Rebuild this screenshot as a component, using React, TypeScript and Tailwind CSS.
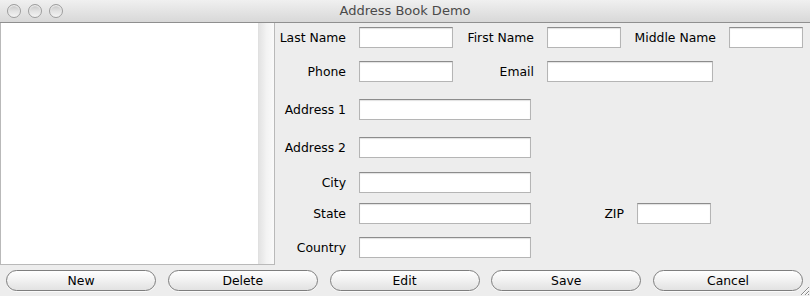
import React from 'react'

const font = { fontFamily: '"DejaVu Sans", Verdana, sans-serif' }

const Field = ({ w }: { w: string }) => (
  <div
    className={`${w} h-[21px] bg-white border border-[#b5b5b5] border-t-[#8c8c8c] shadow-[inset_0_1px_1px_rgba(0,0,0,0.12)]`}
  />
)

const Label = ({ w, text }: { w: string; text: string }) => (
  <div className={`${w} shrink-0 text-right text-[12.4px] text-black pr-[13px] pt-[2px]`}>{text}</div>
)

const Light = () => (
  <div className="w-[14px] h-[14px] rounded-full border border-[#9d9d9d] bg-gradient-to-b from-[#c4c4c4] via-[#e2e2e2] to-[#f4f4f4] shadow-[inset_0_1px_1px_rgba(255,255,255,0.8)]" />
)

const Button = ({ text }: { text: string }) => (
  <button className="w-[150px] h-[21px] pt-[2px] rounded-full border border-[#7e7e7e] bg-gradient-to-b from-[#ffffff] via-[#f1f1f1] to-[#e2e2e2] text-[12.4px] text-black leading-none shadow-[0_1px_0_rgba(255,255,255,0.7)]">
    {text}
  </button>
)

const App = () => {
  return (
    <div className="w-[810px] h-[296px] bg-[#ededed] flex flex-col overflow-hidden relative" style={font}>
      {/* title bar */}
      <div className="h-[23px] shrink-0 flex items-center px-[7px] border-b border-[#8f8f8f] bg-gradient-to-b from-[#f0f0f0] to-[#d8d8d8] relative">
        <div className="flex gap-[7px]">
          <Light />
          <Light />
          <Light />
        </div>
        <div className="absolute inset-0 flex items-center justify-center text-[13px] text-[#4a4a4a]">
          Address Book Demo
        </div>
      </div>

      <div className="flex h-[242px] shrink-0">
        {/* list */}
        <div className="w-[275px] shrink-0 flex border-l border-b border-r border-[#b9b9b9] bg-white">
          <div className="flex-1" />
          <div className="w-[16px] bg-gradient-to-r from-[#e3e3e3] via-[#f3f3f3] to-[#fafafa] border-l border-[#e0e0e0]" />
        </div>

        {/* form */}
        <div className="flex-1 flex flex-col">
          <div className="flex items-center mt-[4px]">
            <Label w="w-[84px]" text="Last Name" />
            <Field w="w-[94px]" />
            <Label w="w-[94px]" text="First Name" />
            <Field w="w-[74px]" />
            <Label w="w-[108px]" text="Middle Name" />
            <Field w="w-[74px]" />
          </div>
          <div className="flex items-center mt-[13px]">
            <Label w="w-[84px]" text="Phone" />
            <Field w="w-[94px]" />
            <Label w="w-[94px]" text="Email" />
            <Field w="w-[166px]" />
          </div>
          <div className="flex items-center mt-[17px]">
            <Label w="w-[84px]" text="Address 1" />
            <Field w="w-[172px]" />
          </div>
          <div className="flex items-center mt-[17px]">
            <Label w="w-[84px]" text="Address 2" />
            <Field w="w-[172px]" />
          </div>
          <div className="flex items-center mt-[14px]">
            <Label w="w-[84px]" text="City" />
            <Field w="w-[172px]" />
          </div>
          <div className="flex items-center mt-[10px]">
            <Label w="w-[84px]" text="State" />
            <Field w="w-[172px]" />
            <Label w="w-[106px]" text="ZIP" />
            <Field w="w-[74px]" />
          </div>
          <div className="flex items-center mt-[13px]">
            <Label w="w-[84px]" text="Country" />
            <Field w="w-[172px]" />
          </div>
        </div>
      </div>

      {/* buttons */}
      <div className="flex justify-between pl-[6px] pr-[7px] mt-[5px]">
        <Button text="New" />
        <Button text="Delete" />
        <Button text="Edit" />
        <Button text="Save" />
        <Button text="Cancel" />
      </div>

      {/* resize grip */}
      <svg className="absolute right-0 bottom-0" width="12" height="12" viewBox="0 0 12 12">
        <path d="M11 3 L3 11 M11 7 L7 11 M11 10 L10 11" stroke="#8a8a8a" strokeWidth="1" />
        <path d="M11 4 L4 11 M11 8 L8 11" stroke="#ffffff" strokeWidth="1" />
      </svg>
    </div>
  )
}

export default App
